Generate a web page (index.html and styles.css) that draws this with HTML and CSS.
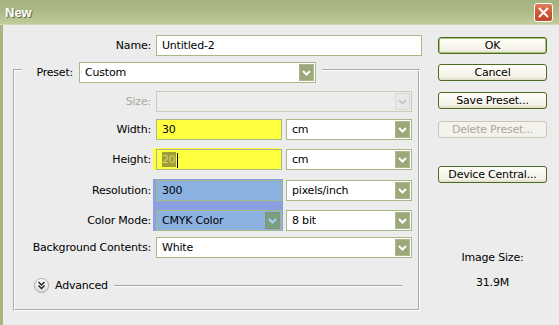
FILE: index.html
```html
<!DOCTYPE html>
<html lang="en">
<head>
    <meta charset="UTF-8">
    <title>New</title>
    <link rel="stylesheet" href="styles.css">
</head>
<body>
    <div class="window">
        <!-- Pasek tytułu -->
        <div class="titlebar">
            <span class="title">New</span>
            <span class="close">
                <svg width="11" height="11" viewBox="0 0 11 11"><path d="M1.5 1.5 L9.5 9.5 M9.5 1.5 L1.5 9.5" stroke="#fff" stroke-width="2" stroke-linecap="round"/></svg>
            </span>
        </div>

        <div class="client">
            <div class="main">
                <div class="name-row">
                    <label class="lbl">Name:</label>
                    <div class="field">Untitled-2</div>
                </div>

                <fieldset class="group">
                    <legend class="preset">
                        <label class="preset-lbl">Preset:</label>
                        <div class="select preset-select">
                            <span>Custom</span>
                            <span class="drop"><svg width="15" height="17" viewBox="0 0 15 17"><path d="M4 7 L7.5 10.5 L11 7" fill="none" stroke="#fff" stroke-width="2"/></svg></span>
                        </div>
                    </legend>

                    <div class="grid">
                        <label class="lbl disabled r1">Size:</label>
                        <div class="select off r1 wide">
                            <span></span>
                            <span class="drop"><svg width="15" height="17" viewBox="0 0 15 17"><path d="M4 7 L7.5 10.5 L11 7" fill="none" stroke="#c8c8c8" stroke-width="2"/></svg></span>
                        </div>

                        <label class="lbl r3">Width:</label>
                        <div class="field yellow r3 c1">30</div>
                        <div class="select r3 c2">
                            <span>cm</span>
                            <span class="drop"><svg width="15" height="17" viewBox="0 0 15 17"><path d="M4 7 L7.5 10.5 L11 7" fill="none" stroke="#fff" stroke-width="2"/></svg></span>
                        </div>

                        <div class="hl-yellow"></div>
                        <label class="lbl r5">Height:</label>
                        <div class="field yellow r5 c1"><span class="sel">20</span><span class="caret"></span></div>
                        <div class="select r5 c2">
                            <span>cm</span>
                            <span class="drop"><svg width="15" height="17" viewBox="0 0 15 17"><path d="M4 7 L7.5 10.5 L11 7" fill="none" stroke="#fff" stroke-width="2"/></svg></span>
                        </div>

                        <div class="hl-blue"></div>
                        <label class="lbl r7">Resolution:</label>
                        <div class="field blue r7 c1">300</div>
                        <div class="select r7 c2">
                            <span>pixels/inch</span>
                            <span class="drop"><svg width="15" height="17" viewBox="0 0 15 17"><path d="M4 7 L7.5 10.5 L11 7" fill="none" stroke="#fff" stroke-width="2"/></svg></span>
                        </div>

                        <label class="lbl r9">Color Mode:</label>
                        <div class="select blue r9 c1">
                            <span>CMYK Color</span>
                            <span class="drop"><svg width="15" height="17" viewBox="0 0 15 17"><path d="M4 7 L7.5 10.5 L11 7" fill="none" stroke="#a9d2f2" stroke-width="2"/></svg></span>
                        </div>
                        <div class="select r9 c2">
                            <span>8 bit</span>
                            <span class="drop"><svg width="15" height="17" viewBox="0 0 15 17"><path d="M4 7 L7.5 10.5 L11 7" fill="none" stroke="#fff" stroke-width="2"/></svg></span>
                        </div>

                        <label class="lbl r11">Background Contents:</label>
                        <div class="select r11 wide">
                            <span>White</span>
                            <span class="drop"><svg width="15" height="17" viewBox="0 0 15 17"><path d="M4 7 L7.5 10.5 L11 7" fill="none" stroke="#fff" stroke-width="2"/></svg></span>
                        </div>
                    </div>

                    <div class="advanced">
                        <span class="adv-icon">
                            <svg width="15" height="15" viewBox="0 0 15 15"><path d="M4.5 4 L7.5 7 L10.5 4 M4.5 7.5 L7.5 10.5 L10.5 7.5" fill="none" stroke="#222" stroke-width="1.4"/></svg>
                        </span>
                        <span class="adv-text">Advanced</span>
                        <span class="adv-line"></span>
                    </div>
                </fieldset>
            </div>

            <!-- Przyciski -->
            <div class="side">
                <div class="btn default">OK</div>
                <div class="btn cancel">Cancel</div>
                <div class="btn save">Save Preset...</div>
                <div class="btn delete off">Delete Preset...</div>
                <div class="btn device">Device Central...</div>
                <div class="img-size">Image Size:</div>
                <div class="img-val">31.9M</div>
            </div>
        </div>
    </div>
</body>
</html>
```

FILE: styles.css
```css
body {
    margin: 0;
    font-family: "DejaVu Sans", Tahoma, sans-serif;
    font-size: 11px;
    letter-spacing: -0.2px;
    color: #000;
}
.window {
    width: 559px;
    height: 325px;
    background: #ececec;
    overflow: hidden;
}
.titlebar {
    height: 24px;
    display: flex;
    align-items: center;
    justify-content: space-between;
    padding: 0 6px 0 5px;
    background: linear-gradient(#a5b381, #abb986 45%, #c1cc9b);
    border-bottom: 1px solid #cfd8b0;
}
.title {
    color: #fff;
    font: bold 13px "Liberation Sans", Arial, sans-serif;
    letter-spacing: 0;
    text-shadow: 1px 1px 0 #5f6d3d;
}
.close {
    width: 19px;
    height: 19px;
    box-sizing: border-box;
    border: 1px solid #fff;
    border-radius: 3px;
    background: linear-gradient(#e27c5a, #cd5231 60%, #c2482a);
    display: flex;
    align-items: center;
    justify-content: center;
}
.client {
    display: flex;
    height: 300px;
    border-left: 3px solid #a7b57f;
    box-sizing: border-box;
}
.main {
    width: 417px;
    flex: none;
    padding-top: 10px;
}
.name-row {
    display: grid;
    grid-template-columns: 148px 266px;
    column-gap: 5px;
}
.lbl {
    text-align: right;
    line-height: 21px;
    padding-right: 2px;
    white-space: nowrap;
}
.name-row .lbl {
    padding-right: 0;
}
.lbl.disabled {
    color: #aca899;
}
.field, .select {
    height: 21px;
    box-sizing: border-box;
    border: 1px solid #a6ba86;
    background: #fff;
    line-height: 19px;
    padding-left: 5px;
    white-space: nowrap;
}
.select {
    display: flex;
    align-items: center;
    justify-content: space-between;
    padding-right: 1px;
}
.drop {
    width: 15px;
    height: 17px;
    background: #9ba879;
    box-shadow: inset 0 0 0 1px #acb78c;
    border-radius: 1px;
    display: block;
}
.drop svg {
    display: block;
}
.select.off {
    background: #ececec;
    border-color: #cbcbba;
}
.select.off .drop {
    background: #e8e8e8;
    box-shadow: inset 0 0 0 1px #d8d8d4;
}
.group {
    margin: 0 0 0 10px;
    padding: 0 0 16px;
    width: 407px;
    box-sizing: border-box;
    border: 2px groove #fff;
    min-width: 0;
}
.preset {
    display: flex;
    align-items: center;
    gap: 6px;
    padding: 6px 6px 0 7px;
    margin-left: 7px;
}
.preset-lbl {
    width: 44px;
    text-align: right;
    line-height: 21px;
}
.preset-select {
    width: 237px;
}
.grid {
    display: grid;
    grid-template-columns: 138px 3px 126px 4px 126px;
    grid-template-rows: 21px 7px 21px 9px 21px 10px 21px 9px 21px 6px 21px;
    margin-top: 8px;
}
.r1 { grid-row: 1; }
.r3 { grid-row: 3; }
.r5 { grid-row: 5; }
.r7 { grid-row: 7; }
.r9 { grid-row: 9; }
.r11 { grid-row: 11; }
.grid .lbl { grid-column: 1; }
.c1 { grid-column: 3; }
.c2 { grid-column: 5; }
.wide { grid-column: 3 / 6; }
.yellow {
    background: #ffff40;
}
.hl-yellow {
    grid-row: 5;
    grid-column: 2 / 4;
    margin-top: -1px;
    background: #ffff40;
}
.hl-blue {
    grid-row: 7 / 10;
    grid-column: 2 / 4;
    margin: -1px -1px 0 0;
    background: #8c9fe0;
}
.blue {
    background: #8cb2e2;
}
.select.blue .drop {
    background: #78a084;
    box-shadow: inset 0 0 0 1px #8a8e76;
}
.sel {
    background: #9d9d3a;
    color: #d6d66a;
    padding: 1px 0;
}
.caret {
    display: inline-block;
    width: 1px;
    height: 15px;
    background: #000;
    vertical-align: middle;
    margin-left: 1px;
}
.advanced {
    display: flex;
    align-items: center;
    height: 15px;
    margin-top: 20px;
    padding: 0 16px 0 19px;
}
.adv-icon {
    width: 15px;
    height: 15px;
    box-sizing: border-box;
    border: 1px solid #a8a8a8;
    border-radius: 50%;
    background: linear-gradient(#fff, #dcdcdc);
    display: flex;
    align-items: center;
    justify-content: center;
}
.adv-icon svg {
    display: block;
    margin: -1px;
}
.adv-text {
    margin-left: 6px;
}
.adv-line {
    flex: 1;
    margin-left: 6px;
    border-top: 1px solid #a2a2a2;
    border-bottom: 1px solid #fff;
}
.side {
    margin-left: 18px;
    width: 109px;
    flex: none;
    padding-top: 12px;
    display: flex;
    flex-direction: column;
}
.btn {
    height: 17px;
    box-sizing: border-box;
    border: 1px solid #4c6a22;
    border-radius: 3px;
    background: linear-gradient(#fffffa, #f4f2e6 80%, #dfdbc8);
    text-align: center;
    line-height: 15px;
    white-space: nowrap;
}
.btn.default {
    box-shadow: inset 0 0 0 1px #a9c47c;
}
.btn.off {
    border-color: #cac7b6;
    background: #f3f2ec;
    color: #aca899;
}
.cancel { margin-top: 10px; }
.save { margin-top: 11px; }
.delete { margin-top: 12px; }
.device { margin-top: 28px; }
.img-size {
    margin-top: 68px;
    text-align: center;
    line-height: 13px;
}
.img-val {
    margin-top: 12px;
    text-align: center;
    line-height: 13px;
}
```
